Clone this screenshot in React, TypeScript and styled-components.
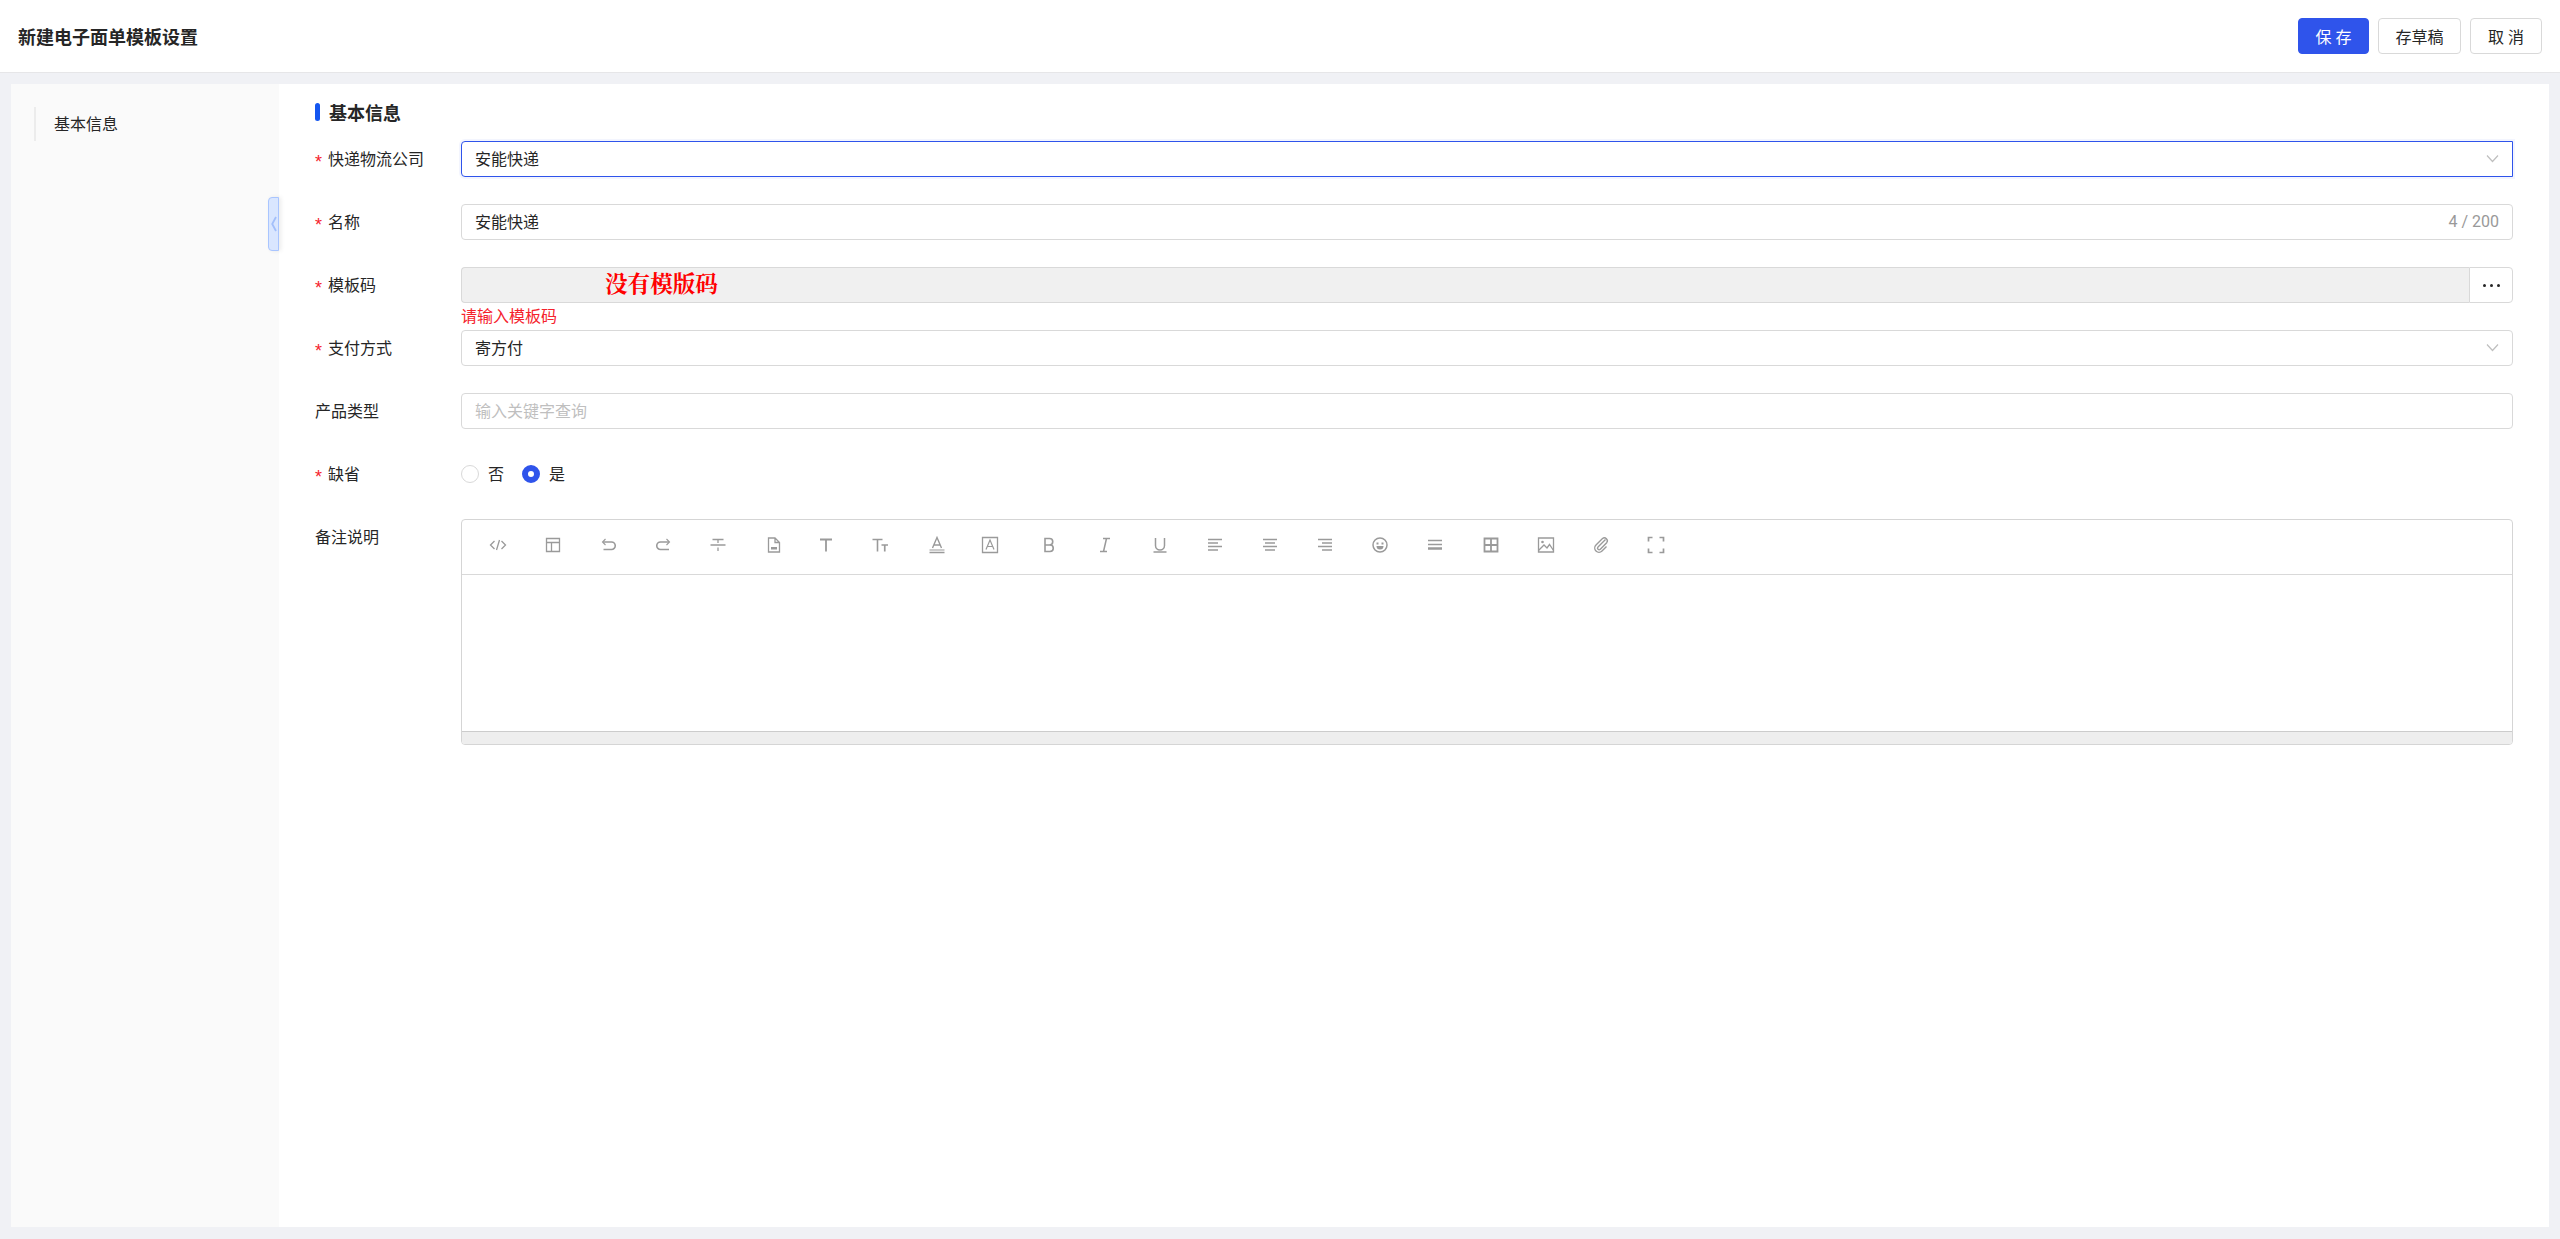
import React from "react";
import styled, { createGlobalStyle } from "styled-components";

const GlobalStyle = createGlobalStyle`
  html, body {
    margin: 0;
    padding: 0;
    height: 100%;
    background-color: #f0f1f5;
    font-family: "Noto Sans CJK SC", "Noto Sans", sans-serif;
    color: #262626;
    overflow: hidden;
  }
  #root {
    height: 100%;
  }
  * {
    box-sizing: border-box;
  }
`;

const PageWrapper = styled.div`
  display: flex;
  flex-direction: column;
  height: 1239px;
`;

const Header = styled.header`
  display: flex;
  align-items: center;
  justify-content: space-between;
  height: 73px;
  padding: 0 18px;
  background-color: #fff;
  border-bottom: 1px solid #e6e6e8;
`;

const PageTitle = styled.h1`
  margin: 0;
  font-size: 18px;
  font-weight: 700;
  line-height: 26px;
`;

const HeaderActions = styled.div`
  display: flex;
  gap: 9px;
`;

const ActionButton = styled.button<{ $primary?: boolean; $spaced?: boolean; $width: number }>`
  width: ${(p) => p.$width}px;
  height: 36px;
  padding: 0;
  border-radius: 4px;
  font-family: inherit;
  font-size: 16px;
  line-height: 1;
  letter-spacing: ${(p) => (p.$spaced ? "4px" : 0)};
  text-indent: ${(p) => (p.$spaced ? "4px" : 0)};
  color: ${(p) => (p.$primary ? "#fff" : "#262626")};
  background-color: ${(p) => (p.$primary ? "#2f54eb" : "#fff")};
  border: 1px solid ${(p) => (p.$primary ? "#2f54eb" : "#d9d9d9")};
`;

const Body = styled.div`
  flex: 1;
  display: flex;
  margin: 11px 11px 12px;
  background-color: #fff;
`;

const Sidebar = styled.aside`
  position: relative;
  width: 268px;
  padding: 23px 23px;
  background-color: #fafafa;
`;

const SideItem = styled.div`
  height: 34px;
  padding-left: 18px;
  border-left: 2px solid #ececec;
  font-size: 16px;
  line-height: 32px;
`;

const CollapseTab = styled.div`
  position: absolute;
  top: 113px;
  right: 0;
  display: flex;
  align-items: center;
  justify-content: center;
  width: 11px;
  height: 54px;
  background-color: #d9e6ff;
  border: 1px solid #a9c5ff;
  border-radius: 4px 0 0 4px;
  box-shadow: 2px 0 4px rgba(0, 0, 0, 0.08);
`;

const Content = styled.main`
  flex: 1;
  padding: 19px 36px 0 36px;
`;

const SectionTitle = styled.h2`
  display: flex;
  align-items: center;
  gap: 9px;
  height: 18px;
  margin: 0 0 20px;
  font-size: 18px;
  font-weight: 700;
  line-height: 18px;

  &::before {
    content: "";
    width: 5px;
    height: 18px;
    border-radius: 3px;
    background-color: #1456f0;
  }
`;

const FormRow = styled.div`
  display: grid;
  grid-template-columns: 146px 1fr;
  min-height: 63px;
`;

const FieldLabel = styled.label<{ $required?: boolean }>`
  height: 36px;
  font-size: 16px;
  line-height: 34px;

  &::before {
    content: ${(p) => (p.$required ? '"*"' : "none")};
    display: inline-block;
    width: 13px;
    color: #f5222d;
    font-family: "Liberation Sans", sans-serif;
    font-size: 18px;
    vertical-align: -3px;
  }
`;

const FieldControl = styled.div<{ $focused?: boolean; $disabled?: boolean }>`
  display: flex;
  align-items: center;
  justify-content: space-between;
  height: 36px;
  padding: 0 13px 2px;
  font-size: 16px;
  background-color: ${(p) => (p.$disabled ? "#f0f0f0" : "#fff")};
  border: 1px solid ${(p) => (p.$focused ? "#2f54eb" : "#d9d9d9")};
  border-radius: ${(p) => (p.$focused ? "4px 0 0 4px" : "4px")};
  box-shadow: ${(p) => (p.$focused ? "0 0 0 2px rgba(47, 84, 235, 0.06)" : "none")};
`;

const Placeholder = styled.span`
  color: #bfbfbf;
`;

const Counter = styled.span`
  color: #999;
  font-family: Roboto, sans-serif;
  font-size: 16px;
`;

const TemplateGroup = styled.div`
  display: flex;
`;

const TemplateField = styled(FieldControl)`
  flex: 1;
  padding: 0 0 5px 143px;
  border-right: 0;
  border-radius: 4px 0 0 4px;
`;

const MissingTemplate = styled.span`
  color: #ff0000;
  font-family: "Noto Serif CJK SC", "Liberation Serif", "Noto Sans CJK SC", serif;
  font-size: 22.6px;
  font-weight: 700;
  line-height: 1;
`;

const MoreButton = styled.button`
  display: flex;
  align-items: center;
  justify-content: center;
  gap: 4px;
  width: 44px;
  height: 36px;
  padding: 0;
  background-color: #fff;
  border: 1px solid #d9d9d9;
  border-radius: 0 4px 4px 0;

  i {
    width: 3px;
    height: 3px;
    border-radius: 50%;
    background-color: #262626;
  }
`;

const ErrorText = styled.div`
  height: 27px;
  font-size: 16px;
  line-height: 24px;
  color: #f5222d;
`;

const RadioGroup = styled.div`
  display: flex;
  align-items: center;
  gap: 18px;
  height: 36px;
  font-size: 16px;
`;

const RadioOption = styled.span`
  display: flex;
  align-items: center;
  gap: 9px;
  line-height: 24px;
  padding-bottom: 2px;
`;

const RadioDot = styled.span<{ $checked?: boolean }>`
  width: 18px;
  height: 18px;
  margin-top: 2px;
  border-radius: 50%;
  background-color: #fff;
  border: ${(p) => (p.$checked ? "6px solid #2f54eb" : "1px solid #d9d9d9")};
`;

const Editor = styled.div`
  display: flex;
  flex-direction: column;
  height: 226px;
  border: 1px solid #d5d5d5;
  border-radius: 4px;
  overflow: hidden;
`;

const Toolbar = styled.div`
  display: grid;
  grid-template-columns: repeat(22, 55.2px);
  align-items: center;
  height: 55px;
  padding-left: 8px;
  border-bottom: 1px solid #d9d9d9;
`;

const ToolIcon = styled.span<{ $nudge: number }>`
  display: flex;
  align-items: center;
  justify-content: center;
  margin-top: -5px;
  color: #9a9a9a;
  transform: translateX(${(p) => p.$nudge}px);
`;

const EditorArea = styled.div`
  flex: 1;
`;

const EditorFooter = styled.div`
  height: 13px;
  background-color: #eeeeee;
  border-top: 1px solid #cccccc;
`;

const Svg: React.FC<{ children: React.ReactNode; filled?: boolean; size?: number }> = ({
  children,
  filled,
  size = 18,
}) => (
  <svg
    width={size}
    height={size}
    viewBox="0 0 18 18"
    fill={filled ? "currentColor" : "none"}
    stroke={filled ? "none" : "currentColor"}
    strokeWidth="1.3"
  >
    {children}
  </svg>
);

// the toolbar icons are not evenly spaced, nudge is the offset from the 55px pitch
const toolbarIcons: { nudge: number; icon: React.ReactNode }[] = [
  { nudge: 0, icon: <Svg><path d="M5.5 5 1.5 9l4 4M12.5 5l4 4-4 4M10.5 4l-3 10" /></Svg> },
  { nudge: 0, icon: <Svg><path d="M2.5 2.5h13v13h-13zM2.5 6.5h13M7.5 6.5v9" /></Svg> },
  { nudge: 1, icon: <Svg><path d="M5.5 3 2.5 6l3 3" strokeWidth="1.1" /><path d="M3 6h8.5a3.5 3.5 0 0 1 0 7.5H3.5" strokeWidth="1.6" /></Svg> },
  { nudge: 0, icon: <Svg><path d="M12.5 3l3 3-3 3" strokeWidth="1.1" /><path d="M15 6H6.5a3.5 3.5 0 0 0 0 7.5H15" strokeWidth="1.6" /></Svg> },
  { nudge: 0, icon: <Svg><path d="M1.5 9h15M3.5 3.5h11M9 3.5V7M9 11.5v3.5" /></Svg> },
  { nudge: 0, icon: <Svg><path d="M3.5 2h6.5l4.5 4.5V16h-11zM10 2v4.5h4.5" /><path d="M6 11h6v2.5H6z" fill="currentColor" stroke="none" /></Svg> },
  { nudge: -3, icon: <Svg><path d="M3 3.5h12M9 3.5V15.5" strokeWidth="1.8" /></Svg> },
  { nudge: -4, icon: <Svg><path d="M1.5 3.5h10M6.5 3.5v12" strokeWidth="1.6" /><path d="M10.5 9h6.5M13.75 9v6.5" strokeWidth="1.7" /></Svg> },
  { nudge: -2, icon: <Svg><path d="M4.5 12 9 1.5 13.5 12M6 9h6" strokeWidth="1.4" /><path d="M1.5 14h15" strokeWidth="1.2" /><path d="M1.5 16.5h15" strokeWidth="1.6" /></Svg> },
  { nudge: -4, icon: <Svg><path d="M1.5 1.5h15v15h-15z" /><path d="M5 13.5 9 4l4 9.5M6.3 10.5h5.4" strokeWidth="1.2" /></Svg> },
  { nudge: 0, icon: <Svg><path d="M5 2.5h4.5a3 3 0 0 1 0 6.5H5zM5 9h5a3.2 3.2 0 0 1 0 6.5H5z" strokeWidth="1.6" /></Svg> },
  { nudge: 0, icon: <Svg><path d="M7 2.5h7M4 15.5h7M10.5 2.5l-3 13" strokeWidth="1.5" /></Svg> },
  { nudge: 0, icon: <Svg><path d="M4.5 2v7.5a4.5 4.5 0 0 0 9 0V2" strokeWidth="1.5" /><path d="M2.5 16h13" strokeWidth="1.6" /></Svg> },
  { nudge: 0, icon: <Svg><path d="M2 3.5h14M2 7h10M2 10.5h14M2 14h10" strokeWidth="1.5" /></Svg> },
  { nudge: 0, icon: <Svg><path d="M2 3.5h14M4 7h10M2 10.5h14M4 14h10" strokeWidth="1.5" /></Svg> },
  { nudge: 0, icon: <Svg><path d="M2 3.5h14M6 7h10M2 10.5h14M6 14h10" strokeWidth="1.5" /></Svg> },
  { nudge: -1, icon: <Svg><circle cx="9" cy="9" r="7" strokeWidth="1.5" /><path d="M5.5 6.5h2v2h-2zM10.5 6.5h2v2h-2z" fill="currentColor" stroke="none" /><path d="M5.5 10h7a3.5 3.5 0 0 1-7 0z" fill="currentColor" stroke="none" /></Svg> },
  { nudge: -1, icon: <Svg><path d="M2 4.5h14M2 8.5h14" strokeWidth="1.3" /><path d="M2 12.5h14" strokeWidth="2.6" /></Svg> },
  { nudge: 0, icon: <Svg><path d="M2.5 2.5h13v13h-13zM2.5 9h13M9 2.5v13" strokeWidth="1.8" /></Svg> },
  { nudge: 0, icon: <Svg><path d="M1.5 2h15v14h-15z" /><circle cx="5.5" cy="6" r="1.3" fill="currentColor" stroke="none" /><path d="M1.5 14.5 7 9l3 3 2.5-3.5 4 6" /></Svg> },
  { nudge: 0, icon: <Svg><path d="M13.5 3.5 6 11a1.6 1.6 0 0 0 2.3 2.3l6.4-6.6a3 3 0 0 0-4.2-4.2L4 9a4.2 4.2 0 0 0 6 6l4.5-4.5" strokeWidth="1.4" /></Svg> },
  { nudge: -1, icon: <Svg><path d="M1.5 5.5v-4h4M12.5 1.5h4v4M16.5 12.5v4h-4M5.5 16.5h-4v-4" strokeWidth="1.7" /></Svg> },
];

const Chevron: React.FC = () => (
  <svg width="13" height="9" viewBox="0 0 13 9" fill="none" stroke="#bfbfbf" strokeWidth="1.2">
    <path d="M1 1.5 6.5 7.5 12 1.5" />
  </svg>
);

const App: React.FC = () => {
  return (
    <PageWrapper>
      <GlobalStyle />
      <Header>
        <PageTitle>新建电子面单模板设置</PageTitle>
        <HeaderActions>
          <ActionButton $primary $spaced $width={71}>保存</ActionButton>
          <ActionButton $width={83}>存草稿</ActionButton>
          <ActionButton $spaced $width={72}>取消</ActionButton>
        </HeaderActions>
      </Header>
      <Body>
        <Sidebar>
          <SideItem>基本信息</SideItem>
          <CollapseTab>
            <svg width="6" height="16" viewBox="0 0 6 16" fill="none" stroke="#a3bffa" strokeWidth="1.8">
              <path d="M5 1 1.2 8 5 15" />
            </svg>
          </CollapseTab>
        </Sidebar>
        <Content>
          <SectionTitle>基本信息</SectionTitle>
          <FormRow>
            <FieldLabel $required>快递物流公司</FieldLabel>
            <FieldControl $focused>
              <span>安能快递</span>
              <Chevron />
            </FieldControl>
          </FormRow>
          <FormRow>
            <FieldLabel $required>名称</FieldLabel>
            <FieldControl>
              <span>安能快递</span>
              <Counter>4 / 200</Counter>
            </FieldControl>
          </FormRow>
          <FormRow>
            <FieldLabel $required>模板码</FieldLabel>
            <div>
              <TemplateGroup>
                <TemplateField $disabled>
                  <MissingTemplate>没有模版码</MissingTemplate>
                </TemplateField>
                <MoreButton>
                  <i />
                  <i />
                  <i />
                </MoreButton>
              </TemplateGroup>
              <ErrorText>请输入模板码</ErrorText>
            </div>
          </FormRow>
          <FormRow>
            <FieldLabel $required>支付方式</FieldLabel>
            <FieldControl>
              <span>寄方付</span>
              <Chevron />
            </FieldControl>
          </FormRow>
          <FormRow>
            <FieldLabel>产品类型</FieldLabel>
            <FieldControl>
              <Placeholder>输入关键字查询</Placeholder>
            </FieldControl>
          </FormRow>
          <FormRow>
            <FieldLabel $required>缺省</FieldLabel>
            <RadioGroup>
              <RadioOption>
                <RadioDot />否
              </RadioOption>
              <RadioOption>
                <RadioDot $checked />是
              </RadioOption>
            </RadioGroup>
          </FormRow>
          <FormRow>
            <FieldLabel>备注说明</FieldLabel>
            <Editor>
              <Toolbar>
                {toolbarIcons.map((item, i) => (
                  <ToolIcon key={i} $nudge={item.nudge}>{item.icon}</ToolIcon>
                ))}
              </Toolbar>
              <EditorArea />
              <EditorFooter />
            </Editor>
          </FormRow>
        </Content>
      </Body>
    </PageWrapper>
  );
};

export default App;
